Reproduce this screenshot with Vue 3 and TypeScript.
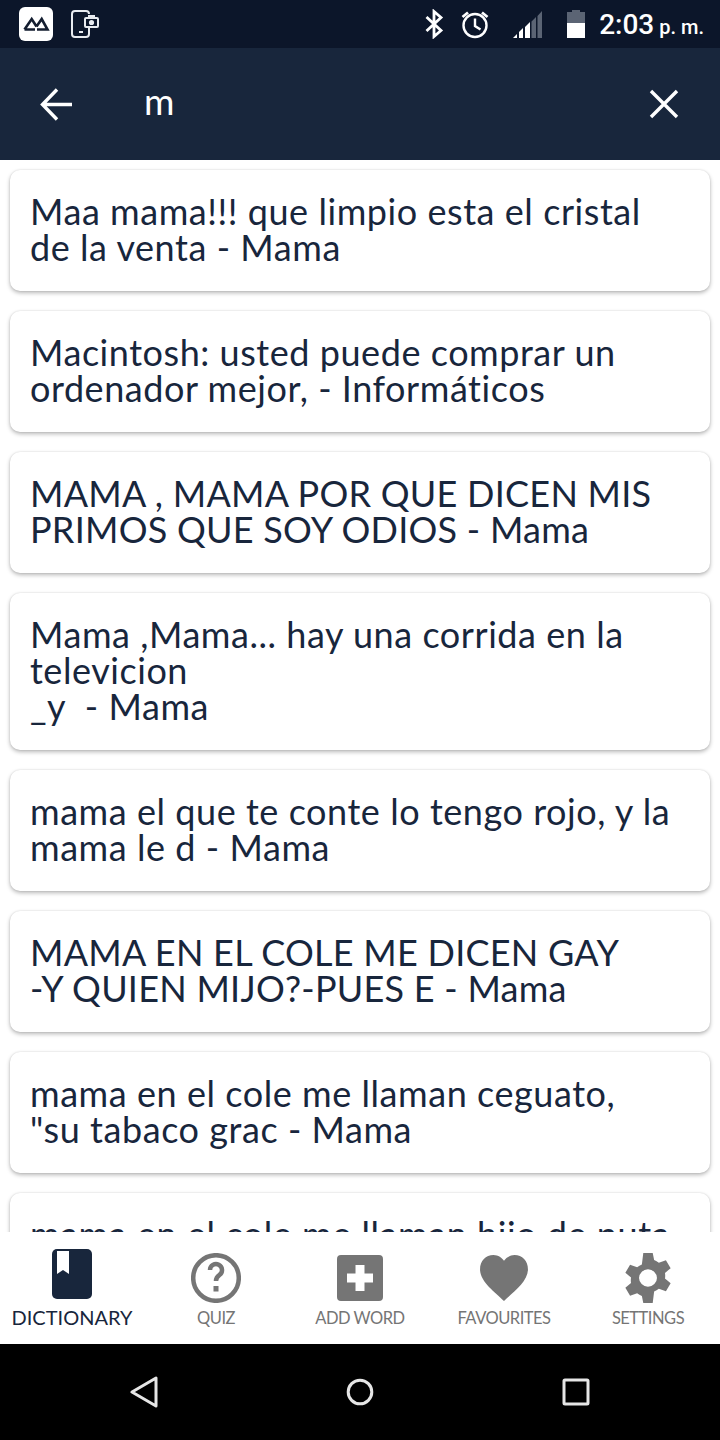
<script setup lang="ts">
const words: string[] = [
  'Maa mama!!! que limpio esta el cristal\nde la venta - Mama',
  'Macintosh: usted puede comprar un\nordenador mejor, - Informáticos',
  'MAMA , MAMA POR QUE DICEN MIS\nPRIMOS QUE SOY ODIOS - Mama',
  'Mama ,Mama... hay una corrida en la\ntelevicion\n_y  - Mama',
  'mama el que te conte lo tengo rojo, y la\nmama le d - Mama',
  'MAMA EN EL COLE ME DICEN GAY\n-Y QUIEN MIJO?-PUES E - Mama',
  'mama en el cole me llaman ceguato,\n"su tabaco grac - Mama',
  'mama en el cole me llaman hijo de puta\nmama - Mama'
]
// las mayusculas ya salen casi del ancho correcto
const isCaps = (w: string) => w.startsWith('MAMA')
</script>

<template>
  <div class="screen">
    <div class="status">
      <div class="status_left">
        <svg width="34" height="34" viewBox="0 0 34 34">
          <rect width="34" height="34" rx="6" fill="#fff" />
          <path d="M5.500 22.500 12.700 12 17.500 19.500M5.500 22.500H16M18 22.500H28.500L22.700 12 17.500 19.500" fill="none" stroke="#141e30" stroke-width="2.600" />
        </svg>
        <svg width="28" height="28" viewBox="0 0 28 28" fill="none" stroke="#e8ebf0" stroke-width="2">
          <path d="M18 4a3 3 0 0 0-3-3H4a3 3 0 0 0-3 3v20a3 3 0 0 0 3 3h11a3 3 0 0 0 3-3v-6" />
          <path d="M8 22h4" />
          <rect x="14" y="8" width="13" height="9" rx="1" />
          <path d="M18 8V6h5v2" />
          <circle cx="20.500" cy="12.500" r="1.600" fill="#e8ebf0" />
        </svg>
      </div>
      <div class="status_right">
        <svg class="i_bt" width="20" height="30" viewBox="0 0 20 30" fill="none" stroke="#fff" stroke-width="2.800">
          <path d="M2.500 8 17 21.500 10 27.500V2.500L17 8.500 2.500 22" />
        </svg>
        <svg class="i_alarm" width="30" height="30" viewBox="0 0 30 30" fill="none" stroke="#fff" stroke-width="2.400">
          <circle cx="15" cy="16.500" r="11.500" />
          <path d="M15 9.500v7.500l5.500 3.500" />
          <path d="M2.500 8 8 3.500M27.500 8 22 3.500" stroke-width="2.800" />
        </svg>
        <svg class="i_signal" width="30" height="30" viewBox="0 0 30 30">
          <path d="M1 29h4v-4z" fill="#fff" />
          <path d="M7 29h4V19l-4 4z" fill="#fff" />
          <path d="M13 29h5V13l-5 5z" fill="#fff" />
          <path d="M19.500 29H24V8l-4.500 4.500zM25.500 29H30V2l-4.500 5z" fill="#5b6474" />
        </svg>
        <svg class="i_battery" width="20" height="30" viewBox="0 0 20 30">
          <path d="M6 1h8v2h5v11H1V3h5z" fill="#5b6474" />
          <rect x="1" y="14" width="18" height="15" fill="#fff" />
        </svg>
        <span class="time">2:03<small> p. m.</small></span>
      </div>
    </div>

    <div class="header">
      <svg width="36" height="36" viewBox="0 0 36 36" fill="none" stroke="#fff" stroke-width="3.400">
        <path d="M32 18.500H3M17 3.500 2.500 18.500 17 33.500" />
      </svg>
      <span class="query">m</span>
      <svg class="close" width="32" height="32" viewBox="0 0 32 32" fill="none" stroke="#fff" stroke-width="3.400">
        <path d="M3 3l26 26M29 3 3 29" />
      </svg>
    </div>

    <div class="list">
      <div class="card" :class="{ caps: isCaps(w) }" v-for="(w, i) in words" :key="i">{{ w }}</div>
    </div>

    <div class="tabs">
      <div class="tab active">
        <div class="tab_icon">
          <svg class="top" width="40" height="50" viewBox="0 0 40 50">
            <rect width="40" height="50" rx="5" fill="#18263c" />
            <path d="M5 2h12v23l-6-4-6 4z" fill="#fff" />
          </svg>
        </div>
        <span>DICTIONARY</span>
      </div>
      <div class="tab">
        <div class="tab_icon">
          <svg width="50" height="50" viewBox="0 0 50 50" fill="none">
            <circle cx="25" cy="25" r="22.800" stroke="#757575" stroke-width="4.500" />
            <path d="M19 17a6 6 0 1 1 9.500 4.900c-2.500 1.800-3.500 3-3.500 6.100" stroke="#757575" stroke-width="4.500" />
            <rect x="22.500" y="33" width="5" height="5.500" fill="#757575" />
          </svg>
        </div>
        <span>QUIZ</span>
      </div>
      <div class="tab">
        <div class="tab_icon">
          <svg class="mid" width="46" height="46" viewBox="0 0 46 46">
            <path fill-rule="evenodd" fill="#757575" d="M4 0h38a4 4 0 0 1 4 4v38a4 4 0 0 1-4 4H4a4 4 0 0 1-4-4V4a4 4 0 0 1 4-4zM18.500 10v8.500H10v9h8.500V36h9v-8.500H36v-9h-8.500V10z" />
          </svg>
        </div>
        <span>ADD WORD</span>
      </div>
      <div class="tab">
        <div class="tab_icon">
          <svg class="mid" width="50" height="46" viewBox="0 3 50 48">
            <path fill="#757575" d="M25 51 C16 42 0 31 0 18 C0 9 6 3 14 3 C19 3 23 6 25 9 C27 6 31 3 36 3 C44 3 50 9 50 18 C50 31 34 42 25 51z" />
          </svg>
        </div>
        <span>FAVOURITES</span>
      </div>
      <div class="tab">
        <div class="tab_icon">
          <svg width="50" height="50" viewBox="1.400 1 21.200 22" preserveAspectRatio="none">
            <path fill="#757575" fill-rule="evenodd" d="M10 1h4l.6 3.100a8 8 0 0 1 2 1.150l3-1.050 2 3.500-2.400 2.050a8 8 0 0 1 0 2.500l2.400 2.050-2 3.500-3-1.050a8 8 0 0 1-2 1.150L14 23h-4l-.6-3.100a8 8 0 0 1-2-1.150l-3 1.050-2-3.500 2.400-2.050a8 8 0 0 1 0-2.500L2.400 9.700l2-3.500 3 1.050a8 8 0 0 1 2-1.150zM12 8.200a3.800 3.800 0 1 0 0 7.600 3.800 3.800 0 0 0 0-7.600z" />
          </svg>
        </div>
        <span>SETTINGS</span>
      </div>
    </div>

    <div class="nav">
      <svg width="28" height="32" viewBox="0 0 28 32" fill="none" stroke="#e6e6e6" stroke-width="3" stroke-linejoin="round">
        <path d="M26 2v28L2 16z" />
      </svg>
      <svg width="28" height="28" viewBox="0 0 28 28" fill="none" stroke="#e6e6e6" stroke-width="3">
        <circle cx="14" cy="14" r="11.800" />
      </svg>
      <svg width="28" height="28" viewBox="0 0 28 28" fill="none" stroke="#e6e6e6" stroke-width="3" stroke-linejoin="round">
        <rect x="2" y="2" width="24" height="24" rx="1" />
      </svg>
    </div>
  </div>
</template>

<style scoped>
.screen {
  width: 720px;
  height: 1440px;
  display: flex;
  flex-direction: column;
  overflow: hidden;
  background: #fff;
  font-family: Lato, "Noto Sans", sans-serif;
}

.status {
  height: 48px;
  flex: none;
  display: flex;
  justify-content: space-between;
  align-items: center;
  background: #0c162a;
  color: #fff;
}

.status_left {
  display: flex;
  align-items: center;
  gap: 18px;
  padding-left: 19px;
}

.status_right {
  display: flex;
  align-items: center;
  padding-right: 16px;
}

.i_bt {
  margin-right: 16px;
}

.i_alarm {
  margin-right: 22px;
}

.i_signal {
  margin-right: 24px;
}

.i_battery {
  margin-right: 13px;
}

.time {
  font-family: Roboto, sans-serif;
  font-size: 28px;
  font-weight: 500;
  white-space: pre;
}

.time small {
  font-size: 20px;
}

.header {
  height: 112px;
  flex: none;
  display: flex;
  align-items: center;
  padding: 0 40px;
  background: #18263c;
  color: #fff;
}

.query {
  margin-left: 68px;
  font-size: 37px;
  padding-bottom: 7px;
  color: #fff;
}

.close {
  margin-left: auto;
}

.list {
  flex: 1;
  min-height: 0;
  overflow: hidden;
  display: flex;
  flex-direction: column;
  gap: 20px;
  padding: 10px 10px 0;
  background: #fff;
}

.card {
  flex: none;
  padding: 23px 20px 26px;
  border-radius: 10px;
  background: #fff;
  box-shadow: 0 2px 4px rgba(0, 0, 0, 0.28), 0 0 2px rgba(0, 0, 0, 0.12);
  color: #18263c;
  font-size: 36px;
  line-height: 36px;
  letter-spacing: 0.55px;
  white-space: pre-wrap;
}

.card.caps {
  letter-spacing: 0.25px;
}

.tabs {
  height: 112px;
  flex: none;
  display: grid;
  grid-template-columns: repeat(5, 144px);
  background: #fff;
  position: relative;
}

.tab {
  display: flex;
  flex-direction: column;
  align-items: center;
  padding-top: 17px;
  color: #757575;
  font-size: 16.5px;
  letter-spacing: -0.5px;
}

.tab_icon {
  height: 54px;
  display: flex;
  align-items: flex-end;
}

.tab_icon .top {
  align-self: flex-start;
}

.tab_icon .mid {
  margin-bottom: 2px;
}

.tab span {
  margin-top: 5px;
  line-height: 20px;
}

.tab.active {
  color: #18263c;
  font-size: 20px;
  letter-spacing: 0;
}

.tab.active span {
  margin-top: 4px;
}

.nav {
  height: 96px;
  flex: none;
  display: flex;
  justify-content: space-between;
  align-items: center;
  background: #000;
  padding: 0 130px;
}
</style>

<style>
html, body {
  margin: 0;
  background: #fff;
}
</style>
